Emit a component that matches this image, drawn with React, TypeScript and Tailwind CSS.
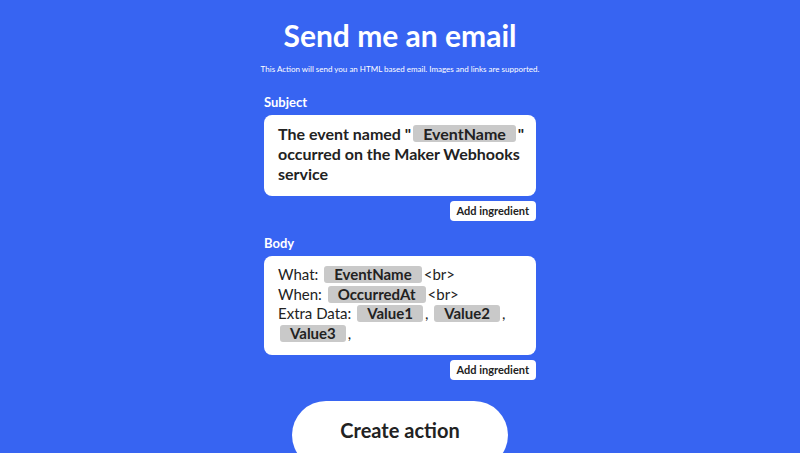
import React from 'react';

function Pill({ children }: { children: React.ReactNode }) {
  return (
    <span className="rounded-[3px] bg-[#c9c9c9] px-[10px] mx-[2px] leading-[17px] inline-block">{children}</span>
  );
}

function AddIngredient() {
  return (
    <div className="flex justify-end mt-[5px]">
      <button className="bg-white rounded-[4px] px-[7px] h-[20px] text-[11px] font-bold text-[#222]">Add ingredient</button>
    </div>
  );
}

export default function App() {
  return (
    <div className="w-[800px] h-[453px] overflow-hidden bg-[#3764f2] text-white" style={{ fontFamily: 'Lato, "Noto Sans", sans-serif' }}>
      <div className="w-[272px] mx-auto flex flex-col">
        <h1 className="text-center text-[30px] font-bold leading-[36px] mt-[17px] whitespace-nowrap -mx-[20px]">Send me an email</h1>
        <p className="text-center text-[8px] mt-[11px] leading-[10px] whitespace-nowrap -mx-[20px]">This Action will send you an HTML based email. Images and links are supported.</p>
        <div className="text-[13px] font-bold mt-[20px] leading-[16px]">Subject</div>
        <div className="mt-[5px] bg-white rounded-[8px] pl-[14px] pr-[8px] pt-[9px] pb-[12px] text-[#222] text-[16px] font-bold leading-[20px] whitespace-nowrap">
          The event named "<Pill>EventName</Pill>"<br />
          occurred on the Maker Webhooks<br />
          service
        </div>
        <AddIngredient />
        <div className="text-[13px] font-bold mt-[14px] leading-[16px]">Body</div>
        <div className="mt-[5px] bg-white rounded-[8px] px-[14px] pt-[9px] pb-[11px] text-[#222] text-[15px] leading-[19.7px]">
          What: <Pill><b>EventName</b></Pill>&lt;br&gt;<br />
          When: <Pill><b>OccurredAt</b></Pill>&lt;br&gt;<br />
          Extra Data: <Pill><b>Value1</b></Pill>, <Pill><b>Value2</b></Pill>, <Pill><b>Value3</b></Pill>,
        </div>
        <AddIngredient />
        <div className="flex justify-center mt-[21px]">
          <button className="w-[216px] h-[68px] rounded-full bg-white text-[#222] text-[20px] font-bold pb-[10px]">Create action</button>
        </div>
      </div>
    </div>
  );
}
